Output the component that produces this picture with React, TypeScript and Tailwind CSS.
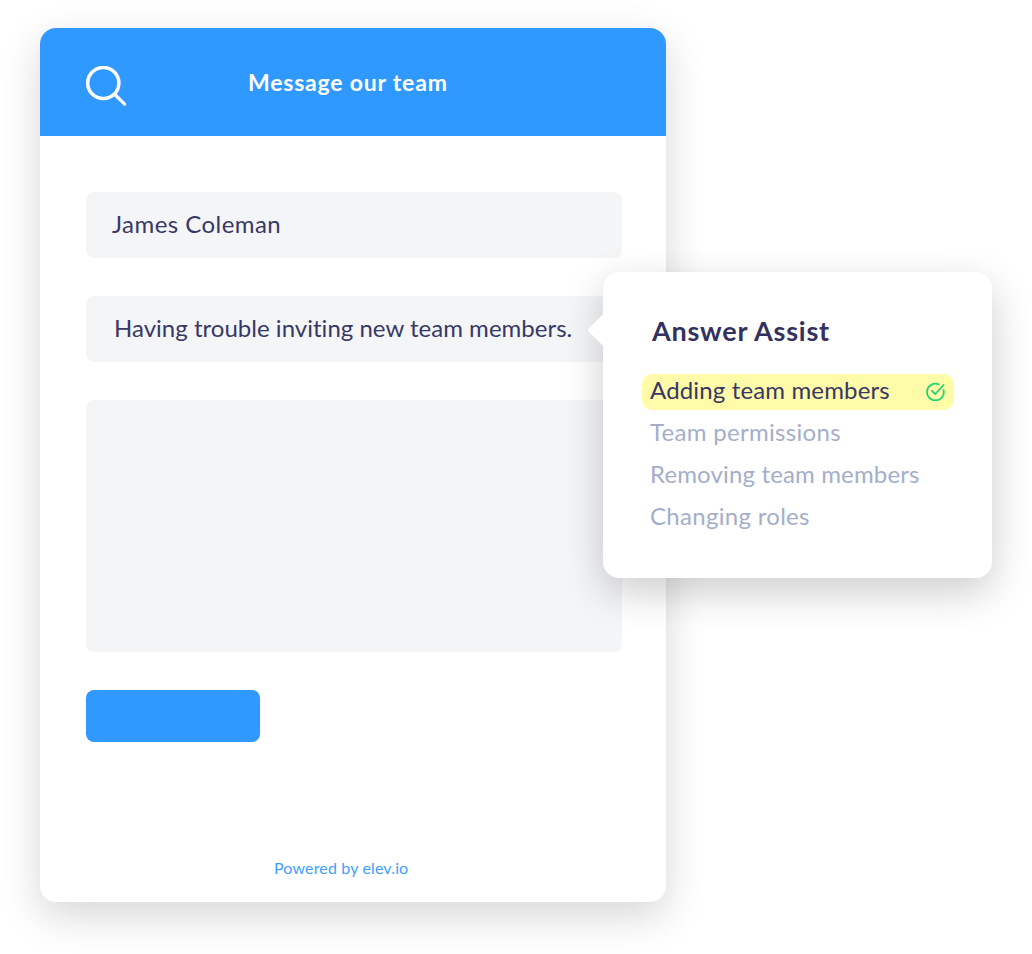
export default function App() {
  const font = "font-['Lato','Noto_Sans',sans-serif]";
  return (
    <div className={`relative w-[1032px] h-[954px] bg-white overflow-hidden pt-[28px] pl-[40px] ${font}`}>
      <div className="w-[626px] h-[874px] bg-white rounded-[16px] overflow-hidden shadow-[0_14px_40px_rgba(0,0,0,0.16)] flex flex-col">
        <div className="h-[108px] bg-[#3099ff] flex items-center pl-[46px] shrink-0">
          <svg width="41" height="41" viewBox="0 0 41 41" fill="none" stroke="white" strokeLinecap="round" className="shrink-0 mt-[8px]">
            <circle cx="17.3" cy="17" r="15.6" strokeWidth="3.5" />
            <path d="M28.8 28.5 L38.6 38.2" strokeWidth="3.2" />
          </svg>
          <div className="ml-[121px] text-[23px] leading-none font-bold text-white tracking-[0.8px]">Message our team</div>
        </div>
        <div className="flex-1 flex flex-col px-[46px] pt-[56px] pr-[44px]">
          <div className="h-[66px] bg-[#f4f5f7] rounded-[8px] flex items-center pl-[26px] pb-[3px] text-[24px] tracking-[0.45px] text-[#383866]">James Coleman</div>
          <div className="h-[66px] mt-[38px] bg-[#f4f5f7] rounded-[8px] flex items-center pl-[28px] pb-[3px] text-[24px] tracking-[0.02px] text-[#383866]">Having trouble inviting new team members.</div>
          <div className="h-[252px] mt-[38px] bg-[#f4f5f7] rounded-[8px]" />
          <div className="h-[52px] w-[174px] mt-[38px] bg-[#3099ff] rounded-[8px]" />
          <div className="mt-[116px] ml-[188px] text-[16px] leading-[20px] tracking-[0.15px] text-[#3f9fff]">Powered by elev.io</div>
        </div>
      </div>

      <div className="absolute left-[603px] top-[272px] w-[389px] h-[306px] bg-white rounded-[16px] shadow-[0_14px_40px_rgba(0,0,0,0.2)] pl-[39px] pr-[38px] pt-[42px]">
        <div className="absolute left-[-11px] top-[46px] w-[24px] h-[24px] bg-white rotate-45 rounded-[3px]" />
        <div className="relative ml-[10px] text-[27px] leading-[34px] font-bold tracking-[0.75px] text-[#33325e]">Answer Assist</div>
        <div className="relative mt-[26px] flex flex-col gap-[6px] text-[24px] leading-[36px] tracking-[0.15px] text-[#a4aeca]">
          <div className="h-[36px] bg-[#fffba8] rounded-[10px] flex items-center justify-between pl-[8px] pr-[9px] text-[#383866]">
            <span className="-mt-[4px]">Adding team members</span>
            <svg width="19" height="19" viewBox="0 0 19 19" fill="none" stroke="#22d46f" strokeWidth="1.8" strokeLinecap="round" strokeLinejoin="round" className="-mt-[1px]">
              <path d="M17.6 8.2 A8.4 8.4 0 1 1 12.8 2.4" />
              <path d="M6 8.8 L9.2 12 L17.6 3" />
            </svg>
          </div>
          <div className="pl-[8px] -mt-[2px] mb-[2px] tracking-[0.3px]">Team permissions</div>
          <div className="pl-[8px] -mt-[2px] mb-[2px]">Removing team members</div>
          <div className="pl-[8px] -mt-[2px] mb-[2px] tracking-[0.3px]">Changing roles</div>
        </div>
      </div>
    </div>
  );
}
